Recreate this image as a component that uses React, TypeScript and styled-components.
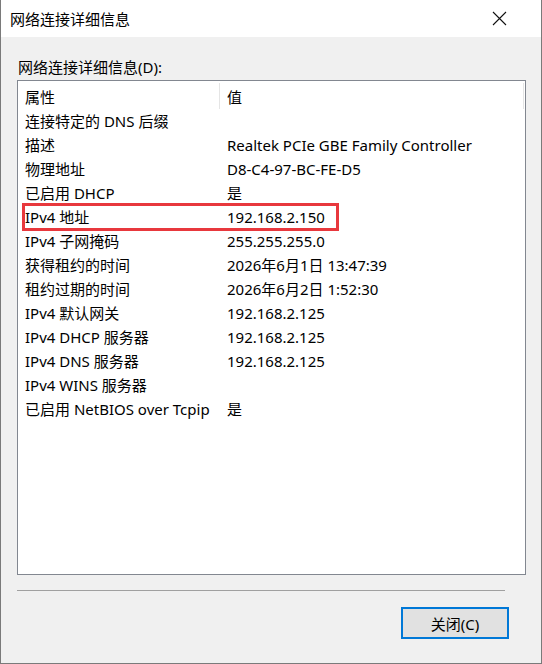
import React from "react";
import styled, { createGlobalStyle } from "styled-components";

const rows: { name: string; value: string; marked?: boolean }[] = [
  { name: "连接特定的 DNS 后缀", value: "" },
  { name: "描述", value: "Realtek PCIe GBE Family Controller" },
  { name: "物理地址", value: "D8-C4-97-BC-FE-D5" },
  { name: "已启用 DHCP", value: "是" },
  { name: "IPv4 地址", value: "192.168.2.150", marked: true },
  { name: "IPv4 子网掩码", value: "255.255.255.0" },
  { name: "获得租约的时间", value: "2026年6月1日 13:47:39" },
  { name: "租约过期的时间", value: "2026年6月2日 1:52:30" },
  { name: "IPv4 默认网关", value: "192.168.2.125" },
  { name: "IPv4 DHCP 服务器", value: "192.168.2.125" },
  { name: "IPv4 DNS 服务器", value: "192.168.2.125" },
  { name: "IPv4 WINS 服务器", value: "" },
  { name: "已启用 NetBIOS over Tcpip", value: "是" },
];

const GlobalStyle = createGlobalStyle`
  html, body {
    margin: 0;
    padding: 0;
    background: #f0f0f0;
  }
  body {
    font-family: "Segoe UI", "Noto Sans", "Noto Sans CJK SC", sans-serif;
    font-size: 15px;
    color: #000;
  }
`;

const Window = styled.div`
  width: 542px;
  height: 664px;
  box-sizing: border-box;
  border: 1px solid #7a7a7a;
  border-top: none;
  background: #f0f0f0;
  display: flex;
  flex-direction: column;
`;

const TitleBar = styled.div`
  height: 37px;
  background: #fff;
  display: flex;
  align-items: center;
  justify-content: space-between;
  padding-left: 9px;
  padding-right: 34px;
  flex-shrink: 0;
`;

const Title = styled.span`
  font-size: 15px;
  line-height: 20px;
`;

const CloseIcon = styled.svg`
  width: 15px;
  height: 15px;
  display: block;
`;

const Body = styled.div`
  flex: 1;
  display: flex;
  flex-direction: column;
  padding: 0 15px 0 16px;
`;

const Label = styled.div`
  margin-top: 20px;
  line-height: 20px;
  padding-left: 1px;
`;

const ListBox = styled.div`
  margin-top: 3px;
  height: 495px;
  box-sizing: border-box;
  border: 1px solid #828790;
  background: #fff;
  padding-top: 4px;
`;

const Row = styled.div`
  position: relative;
  display: grid;
  grid-template-columns: 202px 303px 1px;
  height: 24px;
  line-height: 24px;
  white-space: nowrap;
`;

const Cell = styled.div<{ $divider?: boolean }>`
  padding-left: 7px;
  position: relative;
  ${(p) =>
    p.$divider &&
    `
    &::after {
      content: "";
      position: absolute;
      right: 0;
      top: -2px;
      bottom: 0;
      width: 1px;
      background: #e5e5e5;
    }
  `}
`;

const HeaderEnd = styled.div`
  background: #e5e5e5;
  margin-top: -2px;
`;

const Highlight = styled.div`
  position: absolute;
  left: 4px;
  top: -2px;
  width: 317px;
  height: 28px;
  box-sizing: border-box;
  border: 3px solid #e8383d;
  pointer-events: none;
`;

const Separator = styled.div`
  margin-top: 15px;
  margin-right: 21px;
  height: 1px;
  background: #a0a0a0;
`;

const Footer = styled.div`
  display: flex;
  justify-content: flex-end;
  margin-top: 16px;
  padding-right: 17px;
`;

const Button = styled.button`
  width: 108px;
  height: 32px;
  box-sizing: border-box;
  border: 2px solid #0078d7;
  background: #e1e1e1;
  font-family: inherit;
  font-size: 15px;
  color: #000;
  padding: 0;
  margin: 0;
`;

export default function App() {
  return (
    <>
      <GlobalStyle />
      <Window>
        <TitleBar>
          <Title>网络连接详细信息</Title>
          <CloseIcon viewBox="0 0 15 15">
            <path d="M1 1 L14 14 M14 1 L1 14" stroke="#111" strokeWidth="1.1" fill="none" />
          </CloseIcon>
        </TitleBar>
        <Body>
          <Label>网络连接详细信息(D):</Label>
          <ListBox>
            <Row>
              <Cell $divider>属性</Cell>
              <Cell>值</Cell>
              <HeaderEnd />
            </Row>
            {rows.map((r) => (
              <Row key={r.name}>
                <Cell>{r.name}</Cell>
                <Cell>{r.value}</Cell>
                <div />
                {r.marked && <Highlight />}
              </Row>
            ))}
          </ListBox>
          <Separator />
          <Footer>
            <Button>关闭(C)</Button>
          </Footer>
        </Body>
      </Window>
    </>
  );
}
